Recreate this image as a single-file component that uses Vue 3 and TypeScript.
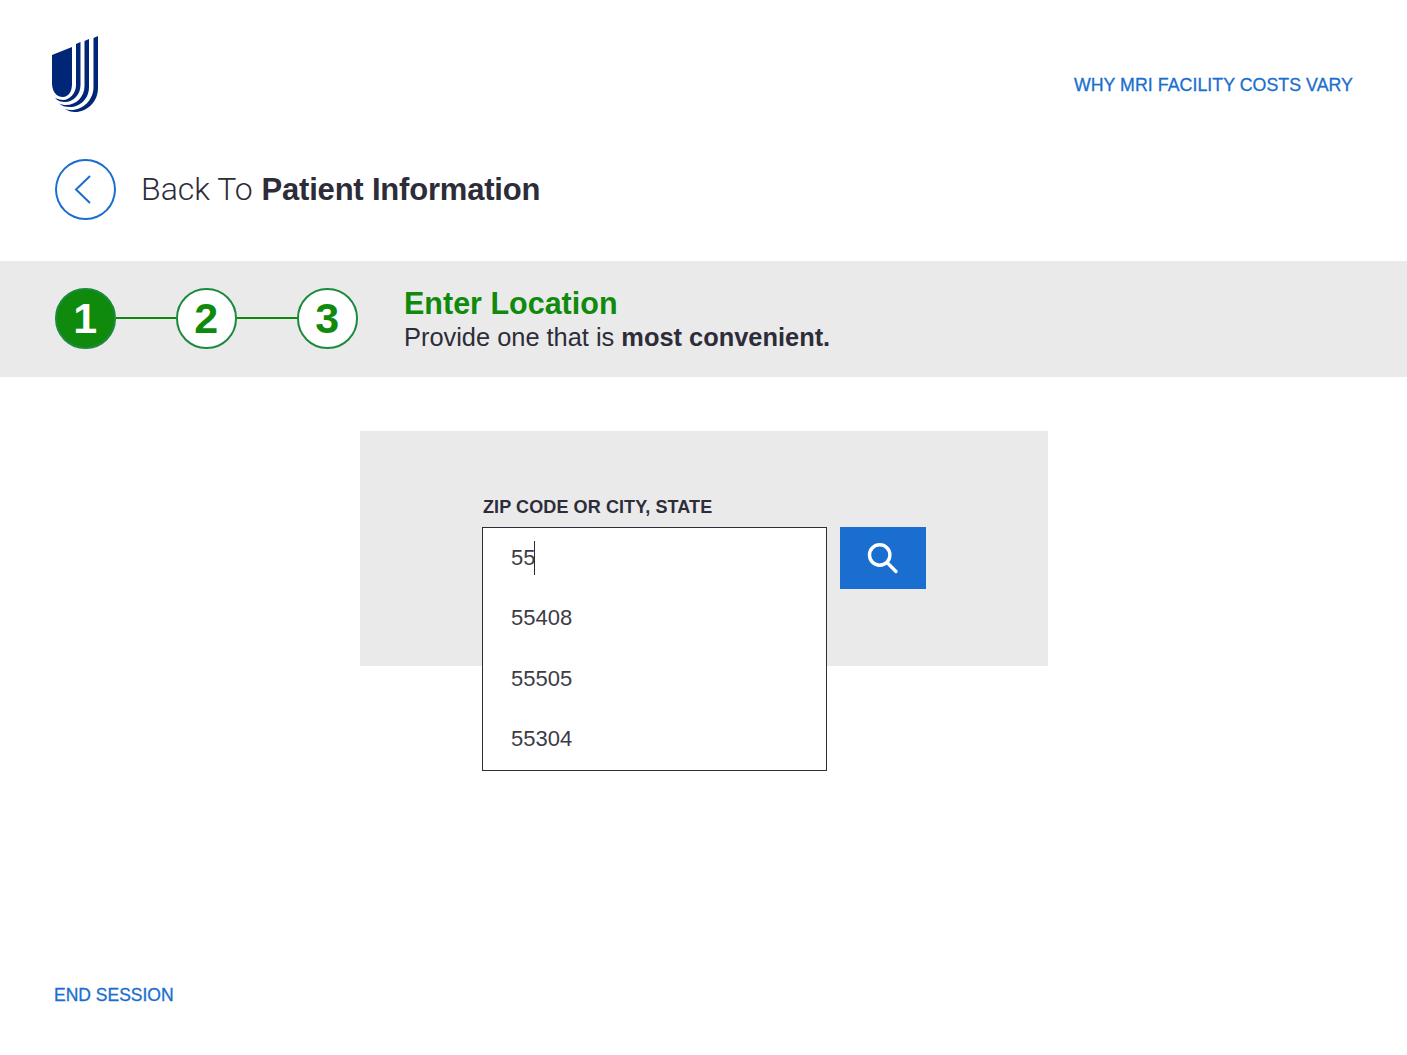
<script setup lang="ts">
const steps = [1, 2, 3]
const suggestions = ['55408', '55505', '55304']
</script>

<template>
  <div class="page">
    <header class="top">
      <svg class="logo" viewBox="0 0 46 76" aria-label="UnitedHealthcare">
        <path d="M0 19 L20 11 V48 C20 56 16 61 11 61 C4 61 0 55 0 47 Z" />
        <path d="M24 8 L28.500 6 V49 C28.500 59 21 66 13 66 C9 66 6 65 3 62 C6 63 9 64 11 64 C18 64 24 57 24 49 Z" />
        <path d="M32.500 5 L37 3 V51 C37 63 28 71 18 71 C13 71 10 70 7 67.500 C10 68.500 12 69 14 69 C24 69 32.500 61 32.500 50 Z" />
        <path d="M41.500 2 L46 0 V52 C46 66 35 76 23 76 C19 76 16 75 13 73 C15 73.500 17 74 19 74 C31 74 41.500 64 41.500 51 Z" />
      </svg>
      <a class="link why" href="#">WHY MRI FACILITY COSTS VARY</a>
    </header>

    <div class="back">
      <span class="back-circle">
        <svg viewBox="0 0 60 60" width="60" height="60">
          <path d="M35 16 L21 29.500 L35 43" />
        </svg>
      </span>
      <h1 class="back-text"><span class="light">Back To</span> <strong>Patient Information</strong></h1>
    </div>

    <section class="band">
      <ol class="steps">
        <li v-for="n in steps" :key="n" class="step" :class="{ current: n === 1 }">{{ n }}</li>
      </ol>
      <div class="band-text">
        <h2>Enter Location</h2>
        <p>Provide one that is <strong>most convenient.</strong></p>
      </div>
    </section>

    <main class="main">
      <div class="card">
        <label class="label">ZIP CODE OR CITY, STATE</label>
        <div class="search-row">
          <div class="combo">
            <div class="combo-box">
              <div class="combo-input">55<i class="caret"></i></div>
              <ul class="options">
                <li v-for="s in suggestions" :key="s">{{ s }}</li>
              </ul>
            </div>
          </div>
          <button class="search-btn" type="button" aria-label="Search">
            <svg viewBox="0 0 32 32" width="32" height="32">
              <circle cx="12.700" cy="13" r="10.200" />
              <path d="M20.500 21 L29 29.500" />
            </svg>
          </button>
        </div>
      </div>
    </main>

    <footer class="foot">
      <a class="link" href="#">END SESSION</a>
    </footer>
  </div>
</template>

<style scoped>
.page {
  height: 1055px;
  display: flex;
  flex-direction: column;
  background: #fff;
  color: #2d2d39;
  font-family: "Liberation Sans", Arial, sans-serif;
  overflow: hidden;
}

.top {
  display: flex;
  justify-content: space-between;
  align-items: flex-start;
  padding: 36px 54px 0 52px;
}

.logo {
  width: 46px;
  height: 76px;
  fill: #002677;
}

.link {
  color: #196ecf;
  font-size: 17.800px;
  line-height: 20px;
  text-decoration: none;
  -webkit-text-stroke: 0.3px #196ecf;
}

.why {
  margin-top: 39px;
  letter-spacing: 0.03px;
}

.back {
  display: flex;
  align-items: center;
  gap: 26.500px;
  padding: 47px 0 0 55px;
}

.back-circle {
  width: 60.500px;
  height: 61px;
  box-sizing: border-box;
  border: 2px solid #196ecf;
  border-radius: 50%;
  display: flex;
  align-items: center;
  justify-content: center;
}

.back-circle svg {
  flex: none;
  fill: none;
  stroke: #196ecf;
  stroke-width: 2;
}

.back-text {
  margin: 0 0 0 -1px;
  font-size: 32px;
  font-weight: 400;
  line-height: 40px;
}

.back-text .light {
  font-family: Roboto, sans-serif;
  font-weight: 300;
}

.back-text strong {
  font-size: 31px;
  letter-spacing: -0.2px;
}

.band {
  margin-top: 41px;
  height: 116px;
  box-sizing: border-box;
  background: #eaeaea;
  display: flex;
  align-items: center;
  padding: 0 0 1px 55px;
}

.steps {
  display: flex;
  gap: 60.500px;
  list-style: none;
  margin: 0;
  padding: 0;
}

.step {
  position: relative;
  width: 60.500px;
  height: 60.500px;
  box-sizing: border-box;
  border: 2px solid #1b8a3d;
  border-radius: 50%;
  background: #fff;
  color: #0f8a0c;
  font-size: 43px;
  font-weight: 700;
  line-height: 56px;
  text-align: center;
}

.step.current {
  background: #0f8a0c;
  color: #fff;
}

.step + .step::before {
  content: "";
  position: absolute;
  left: -62.500px;
  top: 26.500px;
  width: 60.500px;
  height: 2.500px;
  background: #0f8a0c;
}

.band-text {
  margin-left: 46.500px;
}

.band-text h2 {
  margin: 0;
  color: #0f8a0c;
  font-size: 30.500px;
  font-weight: 700;
  line-height: 36px;
}

.band-text p {
  margin: 0;
  font-size: 25.400px;
  line-height: 32px;
}

.main {
  flex: 1;
  padding-top: 54px;
}

.card {
  width: 688px;
  height: 235px;
  box-sizing: border-box;
  margin-left: 360px;
  padding: 66px 0 0 122px;
  background: #eaeaea;
}

.label {
  display: block;
  margin-left: 1px;
  font-size: 18px;
  font-weight: 700;
  letter-spacing: 0.1px;
  line-height: 21px;
  margin-bottom: 9px;
}

.search-row {
  display: flex;
  gap: 13px;
}

.combo {
  position: relative;
  width: 345px;
  height: 62px;
}

.combo-box {
  position: absolute;
  inset: 0 0 auto 0;
  box-sizing: border-box;
  height: 244px;
  border: 1px solid #2d2d39;
  background: #fff;
  font-size: 22px;
  color: #3c3c47;
}

.combo-input {
  display: flex;
  align-items: center;
  height: 60px;
  padding-left: 28px;
}

.caret {
  display: inline-block;
  width: 1px;
  height: 34px;
  margin-left: -1px;
  background: #2d2d39;
}

.options {
  list-style: none;
  margin: 0;
  padding: 0;
}

.options li {
  height: 60.500px;
  line-height: 60px;
  padding-left: 28px;
}

.search-btn {
  width: 86px;
  height: 62px;
  padding: 0;
  border: 0;
  background: #196ecf;
  display: flex;
  align-items: center;
  justify-content: center;
}

.search-btn svg {
  fill: none;
  stroke: #fff;
  stroke-width: 3.400;
  stroke-linecap: round;
}

.foot {
  padding: 0 0 50px 54px;
}

.foot .link {
  font-size: 17.500px;
}
</style>

<style>
html,
body {
  margin: 0;
  background: #fff;
}
</style>
